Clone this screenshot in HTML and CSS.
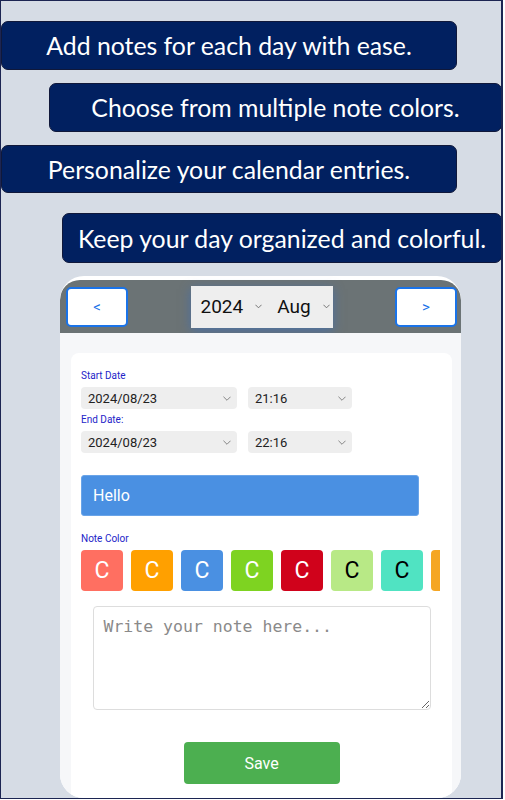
FILE: index.html
```html
<!DOCTYPE html>
<html lang="en">
<head>
    <meta charset="UTF-8">
    <meta name="viewport" content="width=device-width, initial-scale=1.0">
    <title>Calendar Notes</title>
    <link rel="stylesheet" href="styles.css">
</head>
<body>
    <div class="frame">
        <div class="banner banner-one">Add notes for each day with ease.</div>
        <div class="banner banner-two">Choose from multiple note colors.</div>
        <div class="banner banner-three">Personalize your calendar entries.</div>
        <div class="banner banner-four">Keep your day organized and colorful.</div>

        <div class="phone">
            <div class="month-bar">
                <button class="nav-btn">&lt;</button>
                <div class="month-picker">
                    <span class="pick">2024 <svg class="chev-sm" viewBox="0 0 8 5"><polyline points="0.5,0.5 4,4 7.5,0.5"/></svg></span>
                    <span class="pick">Aug <svg class="chev-sm" viewBox="0 0 8 5"><polyline points="0.5,0.5 4,4 7.5,0.5"/></svg></span>
                </div>
                <button class="nav-btn">&gt;</button>
            </div>

            <div class="phone-body">
                <div class="note-card">
                    <div class="field-label">Start Date</div>
                    <div class="select-row">
                        <div class="select date-select">2024/08/23 <svg class="chev" viewBox="0 0 9 5"><polyline points="0.5,0.5 4.5,4.5 8.5,0.5"/></svg></div>
                        <div class="select time-select">21:16 <svg class="chev" viewBox="0 0 9 5"><polyline points="0.5,0.5 4.5,4.5 8.5,0.5"/></svg></div>
                    </div>
                    <div class="field-label end-label">End Date:</div>
                    <div class="select-row">
                        <div class="select date-select">2024/08/23 <svg class="chev" viewBox="0 0 9 5"><polyline points="0.5,0.5 4.5,4.5 8.5,0.5"/></svg></div>
                        <div class="select time-select">22:16 <svg class="chev" viewBox="0 0 9 5"><polyline points="0.5,0.5 4.5,4.5 8.5,0.5"/></svg></div>
                    </div>

                    <div class="title-input">Hello</div>

                    <div class="field-label color-label">Note Color</div>
                    <div class="swatches">
                        <div class="swatch coral">C</div>
                        <div class="swatch orange">C</div>
                        <div class="swatch blue">C</div>
                        <div class="swatch green">C</div>
                        <div class="swatch red">C</div>
                        <div class="swatch lime dark">C</div>
                        <div class="swatch teal dark">C</div>
                        <div class="swatch amber"></div>
                    </div>

                    <textarea class="note-text" placeholder="Write your note here..."></textarea>

                    <button class="save-btn">Save</button>
                </div>
            </div>
        </div>
    </div>
</body>
</html>
```

FILE: styles.css
```css
body {
    margin: 0;
    font-family: Roboto, "Liberation Sans", sans-serif;
}
.frame {
    width: 503px;
    height: 799px;
    box-sizing: border-box;
    border: 1px solid #1c2552;
    border-right-width: 2px;
    background-color: #d6dce5;
    padding-top: 20px;
    display: flex;
    flex-direction: column;
    align-items: flex-start;
    overflow: hidden;
}
.banner {
    box-sizing: border-box;
    height: 49px;
    display: flex;
    align-items: center;
    justify-content: center;
    background-color: #012060;
    border: 1px solid #10183a;
    border-radius: 7px;
    color: white;
    font-family: Lato, "Open Sans", sans-serif;
    font-size: 24.8px;
    white-space: nowrap;
}
.banner-one {
    width: 456px;
}
.banner-two {
    width: 453px;
    margin: 13px 0 0 48px;
}
.banner-three {
    width: 456px;
    height: 48px;
    margin-top: 13px;
}
.banner-four {
    width: 440px;
    height: 50px;
    margin: 20px 0 0 61px;
}
.phone {
    width: 401px;
    flex: 1;
    margin: 13px 0 0 59px;
    padding-top: 4px;
    box-sizing: border-box;
    background: white;
    border-radius: 24px;
    overflow: hidden;
    display: flex;
    flex-direction: column;
}
.month-bar {
    height: 53px;
    flex-shrink: 0;
    background-color: #6b7375;
    border-radius: 20px 20px 0 0;
    display: flex;
    align-items: center;
    justify-content: space-between;
    padding: 0 4px 0 6px;
}
.nav-btn {
    width: 62px;
    height: 40px;
    background: white;
    border: 2px solid #1a73e8;
    border-radius: 5px;
    color: #1a73e8;
    font-family: Roboto, sans-serif;
    font-size: 15px;
    padding: 0;
}
.month-picker {
    width: 142px;
    height: 42px;
    box-sizing: border-box;
    background: #eeeeee;
    display: flex;
    align-items: center;
    padding-left: 10px;
    gap: 15px;
    box-shadow: 0 3px 10px rgba(50, 110, 200, 0.55);
    font-size: 19px;
    color: #111;
}
.pick {
    display: flex;
    align-items: center;
    gap: 12px;
}
.chev-sm {
    width: 7px;
    height: 5px;
    fill: none;
    stroke: #666;
    stroke-width: 1;
}
.phone-body {
    flex: 1;
    background: #f6f7f9;
    padding: 20px 9px 0 11px;
    display: flex;
}
.note-card {
    flex: 1;
    background: white;
    border-radius: 8px;
    padding: 17px 10px 30px 10px;
    display: flex;
    flex-direction: column;
    align-items: flex-start;
}
.field-label {
    font-size: 10px;
    line-height: 12px;
    color: #2424c8;
    margin-bottom: 5px;
}
.end-label {
    margin-top: 5px;
}
.select-row {
    display: flex;
    gap: 11px;
}
.select {
    height: 22px;
    box-sizing: border-box;
    background: #eeeeee;
    border-radius: 4px;
    display: flex;
    align-items: center;
    justify-content: space-between;
    padding: 0 6px 0 7px;
    font-size: 13px;
    color: #222;
}
.date-select {
    width: 156px;
}
.time-select {
    width: 104px;
}
.chev {
    width: 8px;
    height: 5px;
    fill: none;
    stroke: #777;
    stroke-width: 1;
}
.title-input {
    width: 338px;
    height: 41px;
    box-sizing: border-box;
    margin-top: 22px;
    background: #4a90e2;
    border: 1px solid #6aa4e8;
    border-radius: 3px;
    color: white;
    font-size: 16px;
    display: flex;
    align-items: center;
    padding-left: 11px;
}
.color-label {
    margin-top: 17px;
}
.swatches {
    width: 359px;
    display: flex;
    gap: 8px;
    overflow: hidden;
}
.swatch {
    width: 42px;
    height: 41px;
    flex-shrink: 0;
    border-radius: 4px;
    display: flex;
    align-items: center;
    justify-content: center;
    font-size: 23px;
    color: white;
}
.swatch.dark {
    color: black;
}
.coral { background: #ff6f61; }
.orange { background: #ffa000; }
.blue { background: #4a90e2; }
.green { background: #7ed321; }
.red { background: #d0021b; }
.lime { background: #b8e986; }
.teal { background: #50e3c2; }
.amber { background: #f5a623; }
.note-text {
    width: 338px;
    height: 104px;
    box-sizing: border-box;
    margin: 15px auto 0 auto;
    border: 1px solid #dddddd;
    border-radius: 4px;
    padding: 10px;
    font-family: "DejaVu Sans Mono", monospace;
    font-size: 16.5px;
    resize: vertical;
}
.note-text::placeholder {
    color: #8a8a8a;
}
.save-btn {
    width: 156px;
    height: 42px;
    margin: 32px auto 0 auto;
    background: #4caf50;
    border: none;
    border-radius: 4px;
    color: white;
    font-family: Roboto, sans-serif;
    font-size: 16px;
}
```
